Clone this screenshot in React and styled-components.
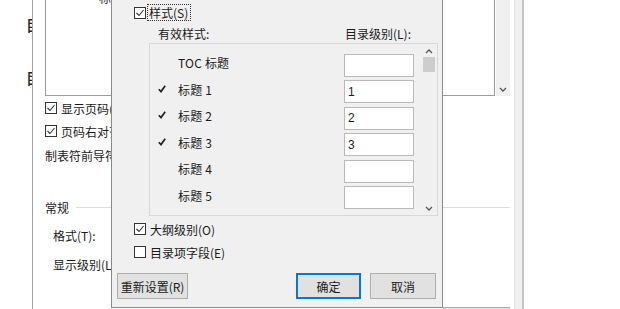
import React from "react";
import styled, { createGlobalStyle } from "styled-components";

const GlobalStyle = createGlobalStyle`
  html, body {
    margin: 0;
    padding: 0;
    background: #ffffff;
  }
  body {
    font-family: "Noto Sans CJK SC", "Microsoft YaHei", sans-serif;
    font-size: 12px;
    color: #1a1a1a;
  }
`;

const Page = styled.div`
  position: relative;
  width: 620px;
  height: 309px;
  display: flex;
  overflow: hidden;
  background: #ffffff;
`;

const LeftStrip = styled.div`
  width: 32px;
  overflow: hidden;
  display: flex;
  flex-direction: column;
  padding-top: 17px;
  box-sizing: border-box;
`;

const TabGlyph = styled.div`
  margin-left: 26px;
  font-size: 15px;
  line-height: 16px;
  font-weight: 500;
  color: #222;
  white-space: nowrap;
  margin-bottom: ${(p) => p.gap || 0}px;
`;

const BackDialog = styled.div`
  width: 491px;
  border-left: 1px solid #a3a3a3;
  display: flex;
  background: #ffffff;
`;

const BackBody = styled.div`
  flex: 1;
  display: flex;
  flex-direction: column;
  padding: 0 4px 0 12px;
  overflow: hidden;
  & > * {
    flex-shrink: 0;
  }
`;

const PreviewRow = styled.div`
  display: flex;
  height: 96px;
  gap: 1px;
`;

const PreviewBox = styled.div`
  flex: 1;
  border: 1px solid #9c9c9c;
  border-top: none;
  background: #ffffff;
  overflow: hidden;
`;

const PreviewText = styled.div`
  margin-top: -11px;
  padding-left: 53px;
  color: #333;
`;

const SideScroll = styled.div`
  width: 14px;
  background: #f0f0f0;
  display: flex;
  flex-direction: column;
  justify-content: flex-end;
  align-items: center;
  padding-bottom: 4px;
  box-sizing: border-box;
`;

const BackRow = styled.div`
  display: flex;
  align-items: center;
  height: 20px;
  gap: 4px;
  margin-top: ${(p) => p.mt || 0}px;
  padding-left: ${(p) => p.indent || 0}px;
  white-space: nowrap;
`;

const GroupLine = styled.div`
  flex: 1;
  height: 1px;
  background: #dcdcdc;
  margin-left: 3px;
`;

const BackFooter = styled.div`
  display: flex;
  justify-content: flex-end;
  margin-top: 33px;
`;

const BackButtonEdge = styled.div`
  width: 65px;
  height: 10px;
  border: 1px solid #adadad;
  background: #e1e1e1;
`;

const RightBand = styled.div`
  width: 10px;
  background: #f0f0f0;
  border-left: 1px solid #e2e2e2;
  border-right: 2px solid #c4c4c4;
  box-sizing: border-box;
`;

const ForeDialog = styled.div`
  position: absolute;
  left: 111px;
  top: 0;
  width: 332px;
  height: 308px;
  box-sizing: border-box;
  border: 1px solid #8a8a8a;
  border-top: none;
  background: #f0f0f0;
  display: flex;
  flex-direction: column;
`;

const CheckRow = styled.div`
  display: flex;
  align-items: center;
  height: ${(p) => p.h || 16}px;
  margin-top: ${(p) => p.mt || 0}px;
  padding-left: 22px;
  gap: ${(p) => p.gap ?? 4}px;
  white-space: nowrap;
`;

const Box = styled.div`
  width: 12px;
  height: 12px;
  box-sizing: border-box;
  border: 1px solid #333333;
  background: #ffffff;
  display: flex;
  align-items: center;
  justify-content: center;
  flex-shrink: 0;
`;

const FocusLabel = styled.div`
  border: 1px dotted #333;
  height: 17px;
  box-sizing: border-box;
  padding: 0 2px 0 1px;
  display: flex;
  align-items: center;
`;

const HeaderRow = styled.div`
  display: grid;
  grid-template-columns: 187px auto;
  height: 16px;
  align-items: center;
  margin-top: 4px;
  padding-left: 46px;
  white-space: nowrap;
`;

const LevelList = styled.div`
  margin: 2px 0 0 37px;
  width: 289px;
  height: 173px;
  box-sizing: border-box;
  border: 1px solid #d8d8d8;
  background: #f0f0f0;
  display: flex;
`;

const Rows = styled.div`
  flex: 1;
  padding-top: 8px;
  display: flex;
  flex-direction: column;
`;

const LevelRow = styled.div`
  display: grid;
  grid-template-columns: 28px 166px 70px;
  align-items: center;
  height: 26.5px;
  flex-shrink: 0;
`;

const Tick = styled.div`
  padding-left: 8px;
  display: flex;
  align-items: center;
  height: 23px;
  margin-top: -6px;
`;

const RowLabel = styled.div`
  margin-top: -5px;
  letter-spacing: 0.2px;
`;

const LevelInput = styled.div`
  height: 23px;
  box-sizing: border-box;
  border: 1px solid #bababa;
  background: #ffffff;
  padding-left: 3px;
  display: flex;
  align-items: center;
  font-family: "Liberation Sans", Arial, sans-serif;
  font-size: 12px;
`;

const ListScroll = styled.div`
  width: 16px;
  display: flex;
  flex-direction: column;
  align-items: center;
  padding: 5px 0 4px;
  box-sizing: border-box;
`;

const Thumb = styled.div`
  width: 12px;
  height: 15px;
  background: #cdcdcd;
  margin-top: 3px;
`;

const ScrollGap = styled.div`
  flex: 1;
`;

const ButtonRow = styled.div`
  display: flex;
  margin-top: 13px;
  padding: 0 6px 0 5px;
  gap: 9px;
`;

const Button = styled.div`
  width: ${(p) => p.w}px;
  height: 26px;
  box-sizing: border-box;
  border: ${(p) => (p.primary ? "2px solid #0078d7" : "1px solid #adadad")};
  background: #e1e1e1;
  display: flex;
  align-items: center;
  justify-content: center;
  margin-left: ${(p) => (p.push ? "auto" : "0")};
  white-space: nowrap;
`;

const CheckMark = () => (
  <svg width="10" height="10" viewBox="0 0 10 10">
    <polyline points="1.5,5 4,7.5 8.5,2" fill="none" stroke="#333" strokeWidth="1.1" />
  </svg>
);

const ListTick = () => (
  <svg width="8" height="8" viewBox="0 0 8 8">
    <polyline points="0.8,4.2 3,6.6 7.2,0.8" fill="none" stroke="#222" strokeWidth="1.7" />
  </svg>
);

const Chevron = ({ up }) => (
  <svg width="8" height="5" viewBox="0 0 8 5">
    <polyline
      points={up ? "1,4 4,1 7,4" : "1,1 4,4 7,1"}
      fill="none"
      stroke="#555"
      strokeWidth="1.3"
    />
  </svg>
);

const levels = [
  { name: "TOC 标题", level: "", checked: false },
  { name: "标题 1", level: "1", checked: true },
  { name: "标题 2", level: "2", checked: true },
  { name: "标题 3", level: "3", checked: true },
  { name: "标题 4", level: "", checked: false },
  { name: "标题 5", level: "", checked: false },
];

const App = () => {
  return (
    <Page>
      <GlobalStyle />
      <LeftStrip>
        <TabGlyph gap={37}>目录</TabGlyph>
        <TabGlyph>目录</TabGlyph>
      </LeftStrip>

      <BackDialog>
        <BackBody>
          <PreviewRow>
            <PreviewBox>
              <PreviewText>标题</PreviewText>
            </PreviewBox>
            <SideScroll>
              <Chevron />
            </SideScroll>
          </PreviewRow>
          <BackRow mt={2}>
            <Box>
              <CheckMark />
            </Box>
            显示页码(S)
          </BackRow>
          <BackRow mt={3}>
            <Box>
              <CheckMark />
            </Box>
            页码右对齐(R)
          </BackRow>
          <BackRow mt={4}>制表符前导符(B):</BackRow>
          <BackRow mt={32}>
            常规
            <GroupLine />
          </BackRow>
          <BackRow mt={8} indent={8}>
            格式(T):
          </BackRow>
          <BackRow mt={9} indent={8}>
            显示级别(L):
          </BackRow>
          <BackFooter>
            <BackButtonEdge />
          </BackFooter>
        </BackBody>
        <RightBand />
      </BackDialog>

      <ForeDialog>
        <CheckRow mt={4} h={17} gap={1}>
          <Box>
            <CheckMark />
          </Box>
          <FocusLabel>样式(S)</FocusLabel>
        </CheckRow>
        <HeaderRow>
          <span>有效样式:</span>
          <span>目录级别(L):</span>
        </HeaderRow>
        <LevelList>
          <Rows>
            {levels.map((l) => (
              <LevelRow key={l.name}>
                <Tick>{l.checked && <ListTick />}</Tick>
                <RowLabel>{l.name}</RowLabel>
                <LevelInput>{l.level}</LevelInput>
              </LevelRow>
            ))}
          </Rows>
          <ListScroll>
            <Chevron up />
            <Thumb />
            <ScrollGap />
            <Chevron />
          </ListScroll>
        </LevelList>
        <CheckRow mt={5}>
          <Box>
            <CheckMark />
          </Box>
          大纲级别(O)
        </CheckRow>
        <CheckRow mt={7}>
          <Box />
          目录项字段(E)
        </CheckRow>
        <ButtonRow>
          <Button w={71}>重新设置(R)</Button>
          <Button w={65} primary push>
            确定
          </Button>
          <Button w={66}>取消</Button>
        </ButtonRow>
      </ForeDialog>
    </Page>
  );
};

export default App;
